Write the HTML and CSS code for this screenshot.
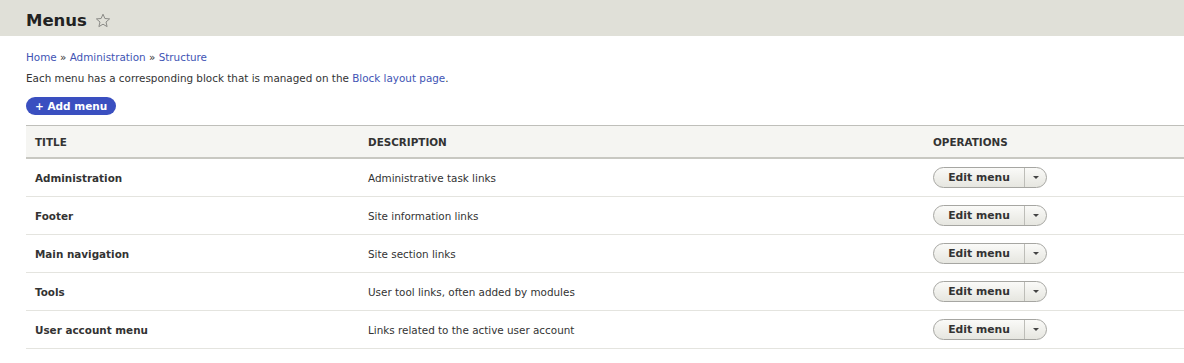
FILE: index.html
```html
<!DOCTYPE html>
<html lang="en">

<head>
    <meta charset="UTF-8">
    <title>Menus</title>
    <link rel="stylesheet" href="styles.css">
</head>

<body>
    <header class="page-header">
        <h1 class="page-title">Menus</h1>
        <span class="shortcut">
            <svg width="16" height="16" viewBox="0 0 16 16">
                <path d="M8 1.2l1.9 4.3 4.7.4-3.6 3.1 1.1 4.6L8 11.2l-4.1 2.4 1.1-4.6-3.6-3.1 4.7-.4z" fill="none" stroke="#8a8a86" stroke-width="1" stroke-linejoin="round" />
            </svg>
        </span>
    </header>

    <main class="content">
        <nav class="breadcrumb">
            <a href="#">Home</a> » <a href="#">Administration</a> » <a href="#">Structure</a>
        </nav>
        <p class="help">Each menu has a corresponding block that is managed on the <a href="#">Block layout page</a>.</p>

        <div class="actions">
            <a href="#" class="button-primary">+ Add menu</a>
        </div>

        <table class="menu-table">
            <thead>
                <tr>
                    <th class="col-title">Title</th>
                    <th class="col-desc">Description</th>
                    <th>Operations</th>
                </tr>
            </thead>
            <tbody>
                <tr>
                    <td class="name">Administration</td>
                    <td>Administrative task links</td>
                    <td><div class="dropbutton"><span class="drop-main">Edit menu</span><span class="drop-toggle"></span></div></td>
                </tr>
                <tr>
                    <td class="name">Footer</td>
                    <td>Site information links</td>
                    <td><div class="dropbutton"><span class="drop-main">Edit menu</span><span class="drop-toggle"></span></div></td>
                </tr>
                <tr>
                    <td class="name">Main navigation</td>
                    <td>Site section links</td>
                    <td><div class="dropbutton"><span class="drop-main">Edit menu</span><span class="drop-toggle"></span></div></td>
                </tr>
                <tr>
                    <td class="name">Tools</td>
                    <td>User tool links, often added by modules</td>
                    <td><div class="dropbutton"><span class="drop-main">Edit menu</span><span class="drop-toggle"></span></div></td>
                </tr>
                <tr>
                    <td class="name">User account menu</td>
                    <td>Links related to the active user account</td>
                    <td><div class="dropbutton"><span class="drop-main">Edit menu</span><span class="drop-toggle"></span></div></td>
                </tr>
            </tbody>
        </table>
    </main>
</body>

</html>
```

FILE: styles.css
```css
body {
    margin: 0;
    padding: 0;
    font-family: "DejaVu Sans", Verdana, sans-serif;
    font-size: 10.4px;
    color: #333;
    background: #fff;
}

a {
    color: #4154b4;
    text-decoration: none;
}

.page-header {
    display: flex;
    align-items: center;
    height: 32px;
    padding: 4px 0 0 26px;
    background: #e0e0d8;
}

.page-title {
    margin: 0;
    font-size: 16.5px;
    font-weight: bold;
    color: #222;
}

.shortcut {
    display: flex;
    margin-left: 8px;
    margin-top: 1px;
}

.content {
    padding: 14px 0 0 26px;
}

.breadcrumb {
    line-height: 14px;
}

.help {
    margin: 7px 0 0;
    line-height: 14px;
}

.actions {
    display: flex;
    margin-top: 12px;
}

.button-primary {
    padding: 0 9px;
    height: 18px;
    line-height: 18px;
    border-radius: 10px;
    background: #3a4fc0;
    color: #fff;
    font-weight: bold;
    font-size: 10.5px;
}

.menu-table {
    width: 100%;
    margin-top: 10px;
    border-collapse: collapse;
}

.menu-table th {
    text-align: left;
    text-transform: uppercase;
    font-weight: bold;
    color: #333;
    background: #f5f5f2;
    height: 31px;
    padding: 0 9px;
    border-top: 1px solid #bfbfba;
    border-bottom: 2px solid #c8c8c2;
}

.menu-table .col-title {
    width: 315px;
}

.menu-table .col-desc {
    width: 547px;
}

.menu-table td {
    height: 37px;
    padding: 0 9px;
    border-bottom: 1px solid #e4e4df;
}

.menu-table .name {
    font-weight: bold;
}

.dropbutton {
    display: inline-flex;
    height: 19px;
    border: 1px solid #a6a6a2;
    border-radius: 11px;
    background: linear-gradient(#fafaf8, #e6e6e0);
    font-weight: bold;
    font-size: 10.8px;
    color: #333;
}

.drop-main {
    width: 90px;
    text-align: center;
    line-height: 19px;
    border-right: 1px solid #bdbdb8;
}

.drop-toggle {
    position: relative;
    width: 21px;
}

.drop-toggle::after {
    content: "";
    position: absolute;
    left: 8px;
    top: 8px;
    border-left: 3px solid transparent;
    border-right: 3px solid transparent;
    border-top: 3px solid #444;
}
```
